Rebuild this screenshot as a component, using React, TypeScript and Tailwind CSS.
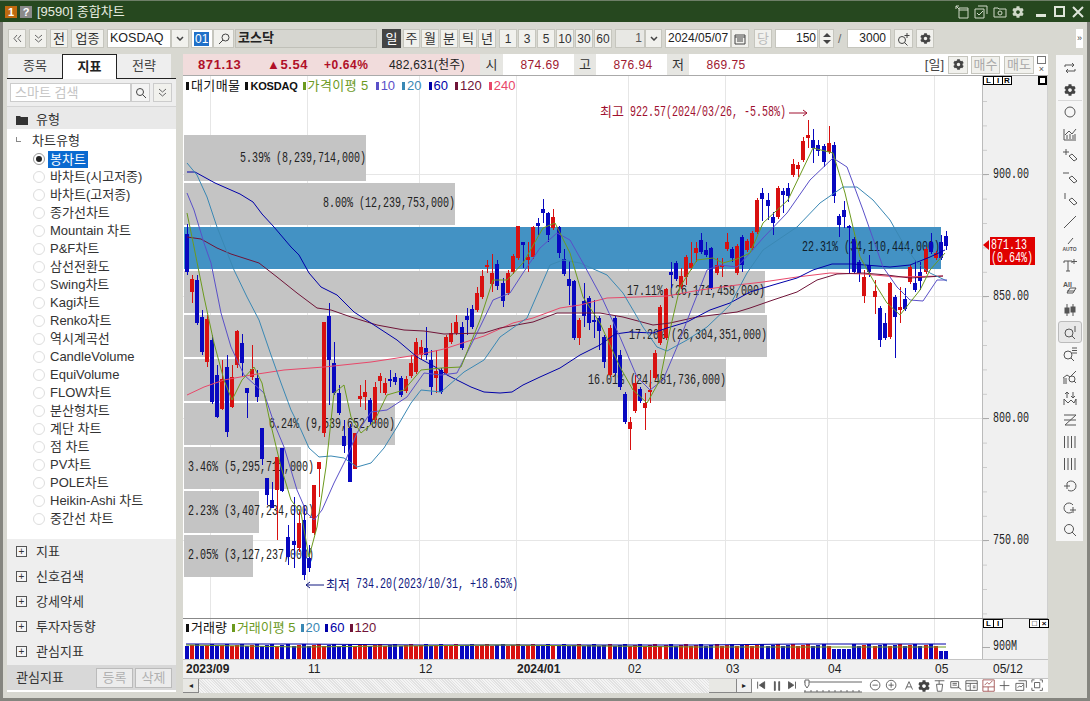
import type { ReactNode } from 'react';
import { FaCog } from 'react-icons/fa';

const FONT = "[font-family:'Liberation_Sans','Noto_Sans_CJK_KR',sans-serif]";
const MONO = "'Liberation Mono','Noto Sans CJK KR',monospace";

// x, body top, body bottom, wick top, wick bottom, 1 = up (red) 0 = down (blue)
const CANDLES: number[][] = [
  [187,234,272,224,275,0],[192,279,292,275,303,1],[197,280,323,275,325,0],[202,317,352,310,355,0],[207,319,362,315,367,1],
  [212,340,402,335,404,0],[217,375,417,365,418,0],[222,379,409,360,410,1],[227,367,432,355,437,0],[232,377,407,365,408,1],
  [237,331,365,330,368,1],[242,343,363,334,376,0],[247,388,393,388,418,0],[252,369,377,345,380,1],[257,378,397,370,402,0],
  [262,428,459,428,465,0],[267,478,495,478,505,0],[272,500,508,482,505,0],[277,457,490,457,540,1],[282,448,491,448,492,0],
  [288,537,557,525,565,0],[294,541,545,497,568,0],[299,523,548,510,552,1],[304,520,575,505,580,0],[309,558,568,545,572,0],
  [314,485,533,485,535,1],[319,462,469,462,497,1],[324,322,433,322,437,1],[329,316,360,303,405,0],[334,363,393,342,395,0],
  [339,393,413,385,415,0],[344,436,446,420,453,0],[350,428,482,424,482,0],[355,433,469,433,469,1],[360,396,399,385,407,1],
  [365,392,397,380,410,1],[370,400,422,398,425,0],[375,387,420,382,423,1],[380,376,381,373,393,1],[385,383,393,378,395,1],
  [390,379,381,370,387,0],[395,377,382,373,385,0],[401,378,395,376,397,0],[406,379,391,376,393,1],[411,363,376,355,378,1],
  [416,342,372,338,374,1],[421,347,355,340,360,1],[426,348,355,327,360,0],[431,360,387,350,395,0],[436,371,378,350,393,1],
  [441,370,392,368,394,0],[446,337,373,335,375,1],[451,333,342,323,344,1],[456,322,333,315,335,1],[462,327,348,322,350,0],
  [467,316,320,308,335,0],[472,309,327,305,329,0],[477,293,310,287,312,1],[482,276,297,270,299,1],[487,265,267,260,273,1],
  [492,273,284,254,292,1],[497,264,286,260,290,0],[503,283,301,278,307,0],[508,273,293,270,295,1],[513,256,272,254,274,1],
  [518,226,258,226,260,1],[523,242,245,242,268,0],[528,257,260,242,272,1],[533,227,257,226,259,1],[538,223,226,218,235,0],
  [543,209,213,199,223,0],[548,213,235,212,242,0],[553,217,228,209,230,1],[559,227,253,226,258,0],[564,259,274,249,276,0],
  [569,279,286,261,305,0],[574,281,338,280,340,0],[579,320,338,318,345,1],[584,301,316,283,327,0],[589,298,323,296,330,0],
  [594,320,322,300,338,0],[599,318,331,316,350,0],[604,337,362,335,368,0],[610,328,375,325,377,1],[615,318,373,316,375,0],
  [620,355,387,350,390,0],[625,394,422,392,424,0],[630,422,429,417,450,1],[635,383,411,375,413,1],[640,389,401,387,403,0],
  [645,403,408,393,430,1],[650,390,392,370,403,1],[655,353,378,350,380,1],[660,307,343,305,345,1],[666,289,338,288,340,1],
  [671,272,275,262,288,0],[676,263,279,261,281,0],[681,276,287,268,289,1],[686,257,277,255,285,1],[691,263,268,242,270,1],
  [696,248,253,242,262,1],[701,240,252,233,254,0],[706,250,255,242,257,0],[711,248,288,247,290,0],[717,265,273,258,275,1],
  [722,265,267,258,277,1],[727,242,249,233,251,1],[732,249,258,247,262,0],[737,246,273,244,275,1],[742,237,265,235,272,0],
  [747,241,250,239,252,1],[752,233,248,231,250,1],[757,200,232,198,234,1],[762,193,199,188,221,0],[768,200,206,193,220,0],
  [773,217,223,212,235,0],[778,188,217,186,219,1],[783,191,195,188,213,0],[788,188,196,183,202,0],[793,164,175,159,177,1],
  [798,165,169,162,177,1],[803,141,160,137,162,1],[808,135,138,120,148,1],[813,140,148,129,163,0],[818,145,151,140,156,0],
  [824,146,162,144,167,0],[829,143,152,126,154,1],[834,145,196,142,203,0],[839,216,225,214,237,0],[844,210,217,201,228,0],
  [849,226,228,225,273,0],[854,239,272,237,274,0],[859,262,273,260,282,0],[864,277,296,270,303,1],[869,265,272,255,277,0],
  [875,291,297,280,314,1],[880,308,340,306,347,0],[885,323,338,313,340,0],[890,283,337,282,339,1],[895,297,317,295,358,0],
  [900,307,310,287,323,1],[905,299,309,288,311,0],[910,267,282,265,284,1],[915,283,290,260,292,0],[920,272,281,262,290,0],
  [926,249,272,247,274,1],[931,242,252,233,254,0],[936,253,258,251,260,1],[941,242,258,235,260,0],[946,236,246,231,250,0],
];

const LINES: { color: string; pts: string }[] = [
  { color: '#e8486a', pts: '187,395 204,387 224,380 251,375 284,370 324,367 371,362 417,355 444,349 484,336 513,323 533,318 560,308 580,305 607,298 637,297 667,296 700,290 737,285 763,282 797,277 830,273 863,274 897,277 943,276' },
  { color: '#701438', pts: '187,237 201,239 217,248 231,254 259,263 277,277 297,293 317,308 331,310 351,317 377,325 404,330 424,331 444,334 484,333 500,328 533,322 557,313 580,313 600,313 623,317 653,325 670,323 697,317 737,312 750,308 773,300 797,292 817,280 837,274 863,273 887,275 910,278 943,276' },
  { color: '#0000a8', pts: '187,172 195,172 215,183 240,194 253,202 262,214 274,227 291,247 299,255 309,273 321,287 337,295 354,312 374,325 397,340 417,357 437,368 447,375 471,387 484,392 500,393 512,392 523,385 540,377 560,368 580,355 600,345 615,334 630,332 653,333 667,328 687,322 710,310 730,303 750,292 773,285 797,278 813,270 832,264 853,264 890,267 910,265 930,257 945,250' },
  { color: '#3a88b4', pts: '187,163 197,175 207,197 217,227 234,270 247,297 259,320 271,355 281,383 291,410 301,430 309,448 319,457 331,456 344,458 357,467 371,463 384,448 397,427 411,403 421,390 441,392 464,372 484,360 500,337 527,318 550,265 563,260 580,263 607,275 623,293 643,327 657,347 667,351 687,340 707,327 730,305 747,273 763,250 797,227 820,203 843,187 857,187 873,200 890,220 903,243 917,263 930,273 947,281' },
  { color: '#5a50c8', pts: '187,193 194,210 204,243 211,263 221,313 231,347 237,360 244,375 264,393 274,423 284,447 297,490 307,513 314,520 322,510 334,483 347,457 357,433 371,412 387,410 407,397 424,373 441,375 457,373 480,327 493,300 510,293 523,273 540,248 557,233 570,240 583,263 603,300 620,337 637,377 650,390 663,380 677,347 690,313 707,270 720,265 737,267 750,253 763,238 787,213 810,180 833,158 847,167 863,210 883,267 897,287 910,300 923,301 937,280 947,280' },
  { color: '#6c9a1e', pts: '187,213 194,247 204,297 214,343 224,380 232,400 242,380 254,367 262,383 269,417 281,467 291,500 301,513 309,557 317,527 326,467 334,393 344,385 351,417 361,433 374,422 387,395 404,390 421,370 441,368 461,367 480,320 493,280 507,280 523,263 543,228 555,223 570,253 583,297 600,323 620,367 633,390 647,403 660,380 670,330 680,287 697,260 713,258 723,263 737,259 750,253 763,223 788,200 813,148 833,153 845,193 860,257 877,287 887,303 900,315 920,290 930,270 945,253' },
];

const ZONES = [
  { y: 135, h: 46, to: 366, label: '5.39% (8,239,714,000)', tx: 240, ty: 162 },
  { y: 183, h: 42, to: 455, label: '8.00% (12,239,753,000)', tx: 323, ty: 207 },
  { y: 227, h: 42, to: 941, label: '22.31% (34,110,444,000)', tx: 802, ty: 251, blue: true },
  { y: 271, h: 42, to: 765, label: '17.11% (26,171,458,000)', tx: 627, ty: 295 },
  { y: 315, h: 42, to: 767, label: '17.20% (26,304,351,000)', tx: 629, ty: 339 },
  { y: 359, h: 42, to: 726, label: '16.01% (24,481,736,000)', tx: 588, ty: 384 },
  { y: 403, h: 42, to: 395, label: '6.24% (9,539,652,000)', tx: 269, ty: 428 },
  { y: 447, h: 42, to: 301, label: '3.46% (5,295,711,000)', tx: 188, ty: 471 },
  { y: 491, h: 42, to: 259, label: '2.23% (3,407,234,000)', tx: 188, ty: 515 },
  { y: 535, h: 42, to: 253, label: '2.05% (3,127,237,000)', tx: 188, ty: 559 },
];

const TREE = [
  '바차트(시고저종)', '바차트(고저종)', '종가선차트', 'Mountain 차트', 'P&F차트', '삼선전환도', 'Swing차트', 'Kagi차트', 'Renko차트',
  '역시계곡선', 'CandleVolume', 'EquiVolume', 'FLOW차트', '분산형차트', '계단 차트', '점 차트', 'PV차트', 'POLE차트', 'Heikin-Ashi 차트', '중간선 차트',
];

const GRID_X = [210, 307, 419, 516, 628, 725, 827, 934];
const GRID_Y = [174, 296, 418, 540];

function Btn({ className = 'w-[18px]', children }: { className?: string; children?: ReactNode }) {
  return (
    <div className={`h-[19px] shrink-0 flex items-center justify-center border border-[#c6c6be] bg-[#f1f1ed] text-[13px] text-[#333] ${className}`}>
      {children}
    </div>
  );
}

function Gear({ size = 11 }: { size?: number }) {
  return <FaCog size={size} color="#444" />;
}

function Ico({ children, size = 16 }: { children: ReactNode; size?: number }) {
  return (
    <svg width={size} height={size} viewBox="0 0 16 16" fill="none" stroke="#555" strokeWidth="1" className="shrink-0">
      {children}
    </svg>
  );
}

function Pencil() {
  return <path d="M7 8l3-2 5 5-3 2z" />;
}

function DoubleChevron({ left }: { left?: boolean }) {
  return (
    <svg width="9" height="9" viewBox="0 0 9 9" fill="none" stroke="#666">
      <path d={left ? 'M4 1L1 4.500l3 3.500M8 1L5 4.500l3 3.500' : 'M1 1l3.500 3L8 1M1 5l3.500 3L8 5'} />
    </svg>
  );
}

const SIDE_ICONS: ReactNode[] = [
  <Ico key="a"><path d="M3 7V5h9M10 3l2 2-2 2M13 9v2H4M6 13l-2-2 2-2" /></Ico>,
  <Gear key="b" size={12} />,
  <Ico key="c"><circle cx="8" cy="8" r="5" /></Ico>,
  <Ico key="d"><path d="M2 3v11h12M3 9l4-4 3 3 4-5M5 13V9M8 13V8M11 13V9M13 13V8" /></Ico>,
  <Ico key="e"><path d="M4 1v6M1 4h6" /><Pencil /></Ico>,
  <Ico key="f"><path d="M1 3h6" /><Pencil /></Ico>,
  <Ico key="g"><path d="M3 1v6" /><Pencil /></Ico>,
  <Ico key="h"><path d="M2 14L14 2" /></Ico>,
  <Ico key="i"><path d="M6 8L11 2" /><text x="0.500" y="15" fontSize="5" fontFamily="Liberation Sans" fontWeight="700" fill="#555" stroke="none">AUTO</text></Ico>,
  <Ico key="j"><path d="M2 5V3h8v2M6 3v10M4 13h4M12 1v5M10 3.500h5" /></Ico>,
  <Ico key="k"><text x="1" y="7" fontSize="7" fontFamily="Liberation Sans" fontWeight="700" fill="#555" stroke="none">All</text><path d="M5 13l3-5h6l-3 5zM5 11h7" /></Ico>,
  <Ico key="l"><path d="M5 2v12M11 2v12" /><rect x="3" y="6" width="4" height="5" fill="#555" /><rect x="9" y="5" width="4" height="5" fill="#555" /></Ico>,
  <Ico key="m"><circle cx="7" cy="9" r="4" /><path d="M10 12l3 3M13 2v6" /></Ico>,
  <Ico key="n"><circle cx="6" cy="9" r="4" /><path d="M9 12l3 3M10 2h5M10 4.500h5M10 7h5" /></Ico>,
  <Ico key="o"><path d="M1 10l4-3 3 2 6-6M1 11h4M1 13h4M1 15h4" /><circle cx="10" cy="11" r="3" /><path d="M12 13l2 2" /></Ico>,
  <Ico key="p"><path d="M5 2v6M3 4l2-2 2 2M11 2v6M9 6l2 2 2-2M2 15V9l4 4 3-3 3 3 2-4v6" /></Ico>,
  <Ico key="q"><path d="M2 3h12L3 13h11M2 8h12" /></Ico>,
  <Ico key="r"><path d="M2.500 2v12M6 2v12M9.500 2v12M13 2v12" /></Ico>,
  <Ico key="s"><path d="M2.500 2v12M6 2v12M9.500 2v12M13 2v12" /></Ico>,
  <Ico key="t"><path d="M5 5a5 5 0 1 1 1 7M2 8h6M5 5v6" /></Ico>,
  <Ico key="u"><path d="M11 5a5 5 0 1 0-1 7M8 10h6M11 7v6" /></Ico>,
  <Ico key="v"><circle cx="7" cy="7" r="4.500" /><path d="M10 10l4 4" /></Ico>,
];

function Legend({ color, children, dark }: { color: string; children: ReactNode; dark?: boolean }) {
  return (
    <span className="flex items-center" style={{ color: dark ? '#111' : color }}>
      <span className="w-[3px] h-[8px] mr-[2px]" style={{ background: color }} />
      {children}
    </span>
  );
}

function TinyBoxes({ items }: { items: string[] }) {
  return (
    <div className="flex border border-black h-[9px] bg-white">
      {items.map((t, i) => (
        <span key={i} className={`w-[9px] flex items-center justify-center text-[8px] leading-none font-bold text-black ${i > 0 ? 'border-l border-black' : ''}`}>
          {t}
        </span>
      ))}
    </div>
  );
}

// chart labels: a half-width look, every char squeezed to 6px
function Mono({ x, y, text, fill = '#222', width }: { x: number; y: number; text: string; fill?: string; width?: number }) {
  return (
    <text x={x} y={y} fontFamily={MONO} fontSize="14" fill={fill} textLength={width ?? text.length * 6} lengthAdjust="spacingAndGlyphs">
      {text}
    </text>
  );
}

export default function App() {
  return (
    <div className={`w-[1090px] h-[701px] overflow-hidden bg-[#d8d8d1] flex flex-col ${FONT}`}>
      {/* title bar */}
      <div className="h-[22px] shrink-0 bg-[#26481f] border-t border-[#6e7f68] flex items-center text-[#e6ece0]">
        <span className="ml-[5px] w-[12px] h-[12px] bg-[#c06a10] text-white text-[11px] font-bold leading-[12px] text-center">1</span>
        <span className="ml-[3px] w-[12px] h-[12px] bg-[#8a8a8a] text-white text-[11px] font-bold leading-[12px] text-center">?</span>
        <span className="ml-[5px] text-[13px]">[9590] 종합차트</span>
        <div className="ml-auto flex items-center gap-[5px] pr-[6px]">
          <svg width="14" height="14" viewBox="0 0 14 14" fill="none" stroke="#cfd8c8"><path d="M4 3h9v10H4zM4 5h9M1 1l3 3M1 1h3M1 1v3" /></svg>
          <svg width="14" height="14" viewBox="0 0 14 14" fill="none" stroke="#cfd8c8"><path d="M4 1h9v8M1 4h9v9H1zM3 8l2 2 4-4" /></svg>
          <svg width="14" height="14" viewBox="0 0 14 14" fill="none" stroke="#cfd8c8"><path d="M1 3h4l1 1h7v8H1z" /><circle cx="7" cy="8" r="2" /></svg>
          <FaCog size={12} color="#cfd8c8" />
          <span className="ml-[7px] w-[10px] h-[3px] mt-[8px] bg-[#dfe6da]" />
          <span className="ml-[3px] w-[11px] h-[11px] border-2 border-[#dfe6da]" />
          <svg className="ml-[2px]" width="12" height="12" viewBox="0 0 12 12" stroke="#dfe6da" strokeWidth="2"><path d="M1 1l10 10M11 1L1 11" /></svg>
        </div>
      </div>

      <div className="flex-1 flex flex-col border-x-[3px] border-b-[3px] border-[#85857f] min-h-0">
        {/* toolbar */}
        <div className="h-[32px] shrink-0 flex items-center pl-[5px] pt-[1px]">
          <Btn className="w-[18px]"><DoubleChevron left /></Btn>
          <Btn className="w-[18px] ml-[3px]"><DoubleChevron /></Btn>
          <Btn className="w-[18px] ml-[3px]">전</Btn>
          <Btn className="w-[33px] ml-[3px]">업종</Btn>
          <div className="ml-[3px] w-[64px] h-[19px] bg-white border border-[#c6c6be] text-[12.500px] leading-[17px] pl-[2px] text-[#222]">KOSDAQ</div>
          <Btn className="w-[18px]"><svg width="8" height="5" viewBox="0 0 8 5" fill="none" stroke="#444" strokeWidth="1.500"><path d="M1 1l3 3 3-3" /></svg></Btn>
          <div className="ml-[2px] w-[22px] h-[19px] bg-white border border-[#c6c6be] flex items-center pl-[2px]"><span className="bg-[#1f6fc8] text-white text-[12px] leading-[14px] px-[1px]">01</span></div>
          <Btn className="w-[21px]"><svg width="12" height="12" viewBox="0 0 12 12" fill="none" stroke="#444"><circle cx="7.500" cy="4.500" r="3.500" /><path d="M5 7l-4 4" /></svg></Btn>
          <div className="ml-px w-[142px] h-[19px] bg-[#d6d6d0] border border-[#c0c0b8] text-[13px] font-bold leading-[15px] pl-[2px] text-[#222]">코스닥</div>
          <Btn className="w-[19px] ml-[5px] !bg-[#444] !text-white !border-[#444]">일</Btn>
          <Btn className="w-[17px] ml-[2px]">주</Btn>
          <Btn className="w-[18px] ml-px">월</Btn>
          <Btn className="w-[18px] ml-px">분</Btn>
          <Btn className="w-[18px] ml-px">틱</Btn>
          <Btn className="w-[18px] ml-px">년</Btn>
          <Btn className="w-[18px] ml-[3px] !text-[12px]">1</Btn>
          <Btn className="w-[18px] ml-px !text-[12px]">3</Btn>
          <Btn className="w-[18px] ml-px !text-[12px]">5</Btn>
          <Btn className="w-[18px] ml-px !text-[12px]">10</Btn>
          <Btn className="w-[18px] ml-px !text-[12px]">30</Btn>
          <Btn className="w-[18px] ml-px !text-[12px]">60</Btn>
          <div className="ml-[3px] w-[30px] h-[19px] bg-[#e8e8e4] border border-[#c6c6be] text-[12px] leading-[17px] text-right pr-[2px] text-[#555]">1</div>
          <Btn className="w-[17px]"><svg width="8" height="5" viewBox="0 0 8 5" fill="none" stroke="#444" strokeWidth="1.500"><path d="M1 1l3 3 3-3" /></svg></Btn>
          <div className="ml-[3px] w-[66px] h-[19px] bg-white border border-[#c6c6be] text-[12px] leading-[17px] pl-[2px] text-[#222]">2024/05/07</div>
          <Btn className="w-[18px]"><svg width="12" height="12" viewBox="0 0 12 12" fill="none" stroke="#444"><path d="M1 2h10v9H1zM1 4h10M3 6h6M3 8h6" /></svg></Btn>
          <Btn className="w-[18px] ml-[5px] !text-[#bbb]">당</Btn>
          <div className="ml-[3px] w-[43px] h-[19px] bg-white border border-[#c6c6be] text-[12px] leading-[17px] text-right pr-[1px] text-[#222]">150</div>
          <div className="ml-px w-[15px] h-[19px] border border-[#c6c6be] bg-[#f1f1ed] flex flex-col items-center justify-center gap-[3px]">
            <span className="w-0 h-0 border-x-[4px] border-x-transparent border-b-[4px] border-b-[#444]" />
            <span className="w-0 h-0 border-x-[4px] border-x-transparent border-t-[4px] border-t-[#444]" />
          </div>
          <span className="ml-[4px] w-[9px] text-[12px] text-[#666]">/</span>
          <div className="w-[44px] h-[19px] bg-white border border-[#c6c6be] text-[12px] leading-[17px] text-right pr-[4px] text-[#222]">3000</div>
          <Btn className="w-[19px] ml-[3px]"><svg width="14" height="14" viewBox="0 0 14 14" fill="none" stroke="#444"><circle cx="5" cy="8" r="3.500" /><path d="M7.500 10.500l3 3M10 1v5M7.500 3.500h5" /></svg></Btn>
          <Btn className="w-[18px] ml-[3px]"><Gear /></Btn>
          <div className="ml-auto mr-[4px] w-[7px] h-[19px] bg-white text-[9px] leading-[19px] text-center text-[#444]">»</div>
        </div>

        <div className="flex-1 flex min-h-0">
          {/* left panel */}
          <div className="ml-[4px] w-[169px] h-[638px] shrink-0 flex flex-col bg-white">
            <div className="h-[25px] shrink-0 flex bg-[#d8d8d1] text-[13px] text-[#444] border-b border-[#222]">
              <div className="ml-px w-[54px] bg-[#eeeeee] flex items-center justify-center">종목</div>
              <div className="w-[55px] h-[25px] bg-white border-x border-t border-[#222] font-bold text-[#222] flex items-center justify-center">지표</div>
              <div className="w-[54px] bg-[#eeeeee] flex items-center justify-center">전략</div>
            </div>
            <div className="h-[27px] shrink-0 bg-[#eeeeee] flex items-center pl-[3px]">
              <div className="w-[121px] h-[19px] bg-white border border-[#ccc] text-[13px] leading-[17px] pl-[4px] text-[#c4c4c4]">스마트 검색</div>
              <div className="w-[19px] h-[19px] bg-[#f4f4f4] border border-[#ccc] flex items-center justify-center">
                <svg width="12" height="12" viewBox="0 0 12 12" fill="none" stroke="#444"><circle cx="5" cy="5" r="3.500" /><path d="M7.500 7.500l3.500 3.500" /></svg>
              </div>
              <div className="ml-[3px] w-[19px] h-[19px] bg-[#f1f1ed] border border-[#ccc] flex items-center justify-center"><DoubleChevron /></div>
            </div>
            <div className="h-[23px] shrink-0 bg-[#e9e9e9] flex items-center pl-[9px] pt-[3px] text-[13px] text-[#333] border-t border-[#d4d4d4]">
              <svg width="12" height="12" viewBox="0 0 12 12" fill="#333"><path d="M0 2h4l1 1h7v8H0z" /></svg>
              <span className="ml-[8px]">유형</span>
            </div>
            <div className="flex-1 bg-white relative text-[13px] text-[#333] pt-[3px]">
              <div className="h-[18px] flex items-center pl-[9px]">
                <span className="w-[5px] h-[5px] border-l border-b border-[#888] mr-[10px] -mt-[3px]" />
                <span className="ml-[1px]">차트유형</span>
              </div>
              <div className="h-[18px] flex items-center pl-[26px]">
                <span className="w-[12px] h-[12px] rounded-full border border-[#999] bg-white flex items-center justify-center"><span className="w-[6px] h-[6px] rounded-full bg-[#222]" /></span>
                <span className="ml-[3px] px-[2px] bg-[#0a6ad0] text-white leading-[17px]">봉차트</span>
              </div>
              {TREE.map((t) => (
                <div key={t} className="h-[18px] flex items-center pl-[26px] whitespace-nowrap">
                  <span className="w-[12px] h-[12px] rounded-full border border-[#ddd] bg-white" />
                  <span className="ml-[5px]">{t}</span>
                </div>
              ))}
            </div>
            <div className="h-[126px] shrink-0 bg-[#eeeeee] text-[13px] text-[#333]">
              {['지표', '신호검색', '강세약세', '투자자동향', '관심지표'].map((t) => (
                <div key={t} className="h-[25px] flex items-center pl-[9px]">
                  <span className="w-[11px] h-[11px] border border-[#555] flex items-center justify-center text-[10px] leading-none bg-white/40">+</span>
                  <span className="ml-[9px]">{t}</span>
                </div>
              ))}
            </div>
            <div className="h-[27px] shrink-0 bg-[#d8d8d8] flex items-center pl-[9px] text-[13px] text-[#333] border-b-2 border-white">
              <span>관심지표</span>
              <div className="ml-auto h-[20px] w-[37px] border border-[#bbb] bg-[#ececec] text-[#b0b0b0] text-center leading-[18px]">등록</div>
              <div className="ml-[2px] mr-[4px] h-[20px] w-[37px] border border-[#bbb] bg-[#ececec] text-[#b0b0b0] text-center leading-[18px]">삭제</div>
            </div>
          </div>

          {/* chart column */}
          <div className="ml-[7px] w-[865px] h-[638px] shrink-0 flex flex-col bg-white">
            <div className="h-[22px] shrink-0 flex items-center border-b border-[#aaa] text-[12px]">
              <div className="w-[297px] h-full bg-[#f1dcdc] flex items-center font-bold text-[#b01028] tracking-[0.6px] whitespace-nowrap">
                <span className="ml-[15px] w-[69px] text-[13px]">871.13</span>
                <span className="w-[57px] text-[13px]">▲5.54</span>
                <span className="w-[65px] text-[12px]">+0.64%</span>
                <span className="font-normal text-[#222] tracking-[0.2px]">482,631(천주)</span>
              </div>
              <div className="w-[23px] h-full bg-[#e6e6e2] flex items-center justify-center text-[13px] text-[#333]">시</div>
              <div className="w-[71px] text-center pl-[3px] text-[#a01830] tracking-[0.4px]">874.69</div>
              <div className="w-[22px] h-full bg-[#e6e6e2] flex items-center justify-center text-[13px] text-[#333]">고</div>
              <div className="w-[71px] text-center pl-[3px] text-[#a01830] tracking-[0.4px]">876.94</div>
              <div className="w-[22px] h-full bg-[#e6e6e2] flex items-center justify-center text-[13px] text-[#333]">저</div>
              <div className="w-[71px] text-center pl-[3px] text-[#a01830] tracking-[0.4px]">869.75</div>
              <div className="ml-auto flex items-center gap-[2px] text-[13px]">
                <span className="text-[#444] mr-[2px]">[일]</span>
                <Btn className="w-[20px] !h-[18px]"><Gear /></Btn>
                <Btn className="w-[29px] !h-[18px] !text-[#aaa] ml-px">매수</Btn>
                <Btn className="w-[30px] !h-[18px] !text-[#aaa] ml-[2px]">매도</Btn>
                <div className="w-[9px] ml-px mr-[2px] flex flex-col gap-px">
                  <span className="h-[8px] border border-[#777]" />
                  <span className="h-[8px] text-[9px] leading-[8px] text-center text-[#555]">×</span>
                </div>
              </div>
            </div>

            {/* price pane */}
            <div className="relative h-[542px] shrink-0">
              <svg width="865" height="542" viewBox="183 76 865 542" className="block">
                <rect x="183" y="76" width="865" height="542" fill="#fff" />
                <rect x="982" y="76" width="66" height="542" fill="#f0f0f0" />
                {GRID_X.map((x) => <rect key={x} x={x} y="76" width="1" height="542" fill="#e6e6e6" />)}
                {GRID_Y.map((y) => <rect key={y} x="183" y={y} width="799" height="1" fill="#e6e6e6" />)}
                {ZONES.map((z) => <rect key={z.y} x="184" y={z.y} width={z.to - 184} height={z.h} fill={z.blue ? '#4392c4' : '#c4c4c4'} />)}
                {ZONES.map((z) => <Mono key={z.y} x={z.tx} y={z.ty} text={z.label} fill={z.blue ? '#10202c' : '#222'} />)}
                {CANDLES.map(([x, top, bot, hi, lo, up], i) => {
                  const color = up ? '#d81010' : '#0808c0';
                  return (
                    <g key={i} fill={color}>
                      <rect x={x} y={hi} width="1" height={lo - hi} />
                      <rect x={x - 2} y={top} width="4" height={Math.max(bot - top, 2)} />
                    </g>
                  );
                })}
                {LINES.map((l) => <polyline key={l.color} points={l.pts} fill="none" stroke={l.color} strokeWidth="1" strokeLinejoin="round" />)}
                <text x={600} y={116} fontSize="13" fontFamily="Noto Sans CJK KR" fill="#a01030" textLength={24}>최고</text>
                <Mono x={630} y={116} text="922.57(2024/03/26, -5.58%)" fill="#a01030" />
                <path d="M789 113h18M803 110l4 3-4 3" fill="none" stroke="#a01030" />
                <path d="M324 585H306M310 582l-4 3 4 3" fill="none" stroke="#101880" />
                <text x={326} y={589} fontSize="13" fontFamily="Noto Sans CJK KR" fill="#101880" textLength={24}>최저</text>
                <Mono x={356} y={588} text="734.20(2023/10/31, +18.65%)" fill="#101880" />
                <rect x="982" y="76" width="1" height="542" fill="#bbb" />
                <rect x="1047" y="76" width="1" height="542" fill="#cfcfcf" />
                {Array.from({ length: 22 }, (_, i) => <rect key={i} x="983" y={101 + i * 24.4} width="4" height="1" fill="#ccc" />)}
                {['900.00', '850.00', '800.00', '750.00'].map((t, i) => (
                  <g key={t}>
                    <rect x="983" y={GRID_Y[i]} width="6" height="1" fill="#aaa" />
                    <Mono x={993} y={GRID_Y[i] + 4} text={t} />
                  </g>
                ))}
                <path d="M983 245l6-5v10z" fill="#e00000" />
                <rect x="990" y="237" width="45" height="28" fill="#e00000" />
                <Mono x={991} y={249} text="871.13" fill="#fff" />
                <Mono x={991} y={262} text="(0.64%)" fill="#fff" />
              </svg>
              <div className="absolute left-[3px] top-[2px] flex items-center gap-[7px] text-[13px] leading-[16px] whitespace-nowrap">
                <span className="flex items-center gap-[5px] tracking-[0.4px]">
                  <Legend color="#111" dark>대기매물</Legend>
                  <Legend color="#111" dark><b className="text-[11px] tracking-[-0.2px]">KOSDAQ</b></Legend>
                  <Legend color="#6c9a1e">가격이평 5</Legend>
                </span>
                <Legend color="#5a50c8">10</Legend>
                <Legend color="#3a88b4">20</Legend>
                <Legend color="#0000a8">60</Legend>
                <Legend color="#701438">120</Legend>
                <Legend color="#e8486a">240</Legend>
              </div>
              <div className="absolute left-[800px] top-0"><TinyBoxes items={['L', 'I', 'R']} /></div>
              <div className="absolute left-[855px] top-0 w-[9px] h-[9px] border-2 border-black bg-white" />
            </div>

            {/* volume pane */}
            <div className="relative h-[41px] shrink-0 border-t border-[#888]">
              <svg width="865" height="40" viewBox="183 620 865 40" className="block">
                <rect x="183" y="620" width="865" height="40" fill="#fff" />
                <rect x="982" y="620" width="66" height="40" fill="#f0f0f0" />
                {GRID_X.map((x) => <rect key={x} x={x} y="620" width="1" height="40" fill="#e6e6e6" />)}
                {CANDLES.map(([x, , , , , up], i) => {
                  const h = i > 147 ? 8 : i > 126 && i < 131 ? 10 : 13 + (i * 7) % 3;
                  return <rect key={i} x={x - 2} y={660 - h} width="4" height={h} fill={up ? '#d81010' : '#0808c0'} />;
                })}
                <path d="M186 645H300L420 646H700L800 645H946" fill="none" stroke="#0000a8" />
                <path d="M186 646L300 648 500 646 700 648 946 648" fill="none" stroke="#6c9a1e" />
                <rect x="982" y="620" width="1" height="40" fill="#bbb" />
                <rect x="982" y="648" width="8" height="1" fill="#aaa" />
                <Mono x={993} y={651} text="900M" />
              </svg>
              <div className="absolute left-[3px] top-[1px] flex items-center gap-[5px] text-[13px] leading-[16px] whitespace-nowrap">
                <Legend color="#111" dark>거래량</Legend>
                <Legend color="#6c9a1e">거래이평 5</Legend>
                <Legend color="#3a88b4">20</Legend>
                <Legend color="#0000a8">60</Legend>
                <Legend color="#701438">120</Legend>
              </div>
              <div className="absolute left-[800px] top-0"><TinyBoxes items={['L', 'I']} /></div>
              <div className="absolute left-[846px] top-0"><TinyBoxes items={['□', '×']} /></div>
            </div>

            {/* time axis */}
            <div className="relative h-[19px] shrink-0 bg-[#f0f0f0] border-t border-[#c4c4c4] text-[12px] leading-[18px] text-[#222]">
              <span className="absolute left-[3px] font-bold">2023/09</span>
              <span className="absolute left-[125px]">11</span>
              <span className="absolute left-[236px]">12</span>
              <span className="absolute left-[334px] font-bold">2024/01</span>
              <span className="absolute left-[445px]">02</span>
              <span className="absolute left-[543px]">03</span>
              <span className="absolute left-[645px]">04</span>
              <span className="absolute left-[752px]">05</span>
              <span className="absolute left-[810px]">05/12</span>
            </div>

            {/* bottom bar */}
            <div className="h-[14px] shrink-0 flex items-center bg-white border-t border-[#c4c4c4]">
              <div className="w-[16px] h-[14px] bg-[#e8e8e4] border-r border-b border-[#888] text-[8px] leading-[13px] text-center text-[#222]">◂</div>
              <div className="w-[510px] h-[14px] bg-[repeating-linear-gradient(45deg,#f4f4f4_0,#f4f4f4_1px,#e2e2e2_1px,#e2e2e2_2px)]" />
              <div className="w-[28px] h-[14px] bg-[#e8e8e4] border-r border-b border-[#888]" />
              <div className="w-[15px] h-[14px] bg-[#f0f0f0] border-r border-b border-[#888] text-[8px] leading-[13px] text-center text-[#222]">▸</div>
              <div className="ml-[3px] flex items-center gap-px text-[#555]">
                <Ico size={14}><path d="M3 3v8" /><path d="M11 3L5 7l6 4z" fill="#555" /></Ico>
                <Ico size={14}><path d="M5 3h1v10H5zM10 3h1v10h-1z" fill="#555" /></Ico>
                <Ico size={14}><path d="M12 3v8" /><path d="M4 3l6 4-6 4z" fill="#555" /></Ico>
              </div>
              <svg className="ml-[3px] shrink-0" width="64" height="14" viewBox="0 0 64 14" fill="none" stroke="#666">
                <path d="M2 3h58M2 13h58" />
                <path d="M3 13v-2M9 13v-2M15 13v-2M21 13v-2M27 13v-2M33 13v-2M39 13v-2M45 13v-2M51 13v-2M57 13v-2" />
                <path d="M3 1h4v5L5 9 3 6z" fill="#fff" />
              </svg>
              <div className="ml-[3px] flex items-center gap-0 justify-between w-[176px]">
                <Ico size={14}><circle cx="7" cy="7" r="5.500" /><path d="M4 7h6" /></Ico>
                <Ico size={14}><circle cx="7" cy="7" r="5.500" /><path d="M4 7h6M7 4v6" /></Ico>
                <Ico size={14}><path d="M4 12l4-9 4 9M5.500 9h5" /></Ico>
                <Gear size={12} />
                <Ico size={14}><path d="M2 2h11M7 2v4M4 6h7l-1 8H5z" /></Ico>
                <Ico size={14}><path d="M2 3h9v7H2zM4 5h5M4 7h5M10 9l4 3" /></Ico>
                <Ico size={14}><path d="M1 2h13v11H1zM1 5h13M6 5v8M3 8h2M9 8h3M9 10h3" /></Ico>
                <Ico size={14}><path d="M1 1h13v13H1zM1 9h13M7 9v5M3 7l3-3 2 2 4-4" stroke="#a05050" /></Ico>
                <Ico size={14}><path d="M7 2v11M2 7.500h11" /></Ico>
                <Ico size={14}><path d="M4 2h9v8M1 5h9v8H1zM3 10l2-2 2 1 2-2" /></Ico>
                <Ico size={14}><path d="M1 4V1h3M10 1h3v3M1 10v3h3M10 13h3v-3M4 4h6v6H4z" /></Ico>
              </div>
            </div>
          </div>

          {/* right tools */}
          <div className="ml-[8px] w-[27px] h-[486px] shrink-0 mt-px bg-[#f6f6f6] flex flex-col items-center pt-[2px]">
            {SIDE_ICONS.map((ic, i) => (
              <div key={i} className={`w-[24px] h-[22px] shrink-0 flex items-center justify-center ${i === 12 ? 'border border-[#bbb] rounded-[3px] bg-[#e8e8e8]' : ''} ${i === 1 ? 'border-b border-[#d8d8d8]' : ''}`}>
                {ic}
              </div>
            ))}
          </div>
        </div>
      </div>
    </div>
  );
}
